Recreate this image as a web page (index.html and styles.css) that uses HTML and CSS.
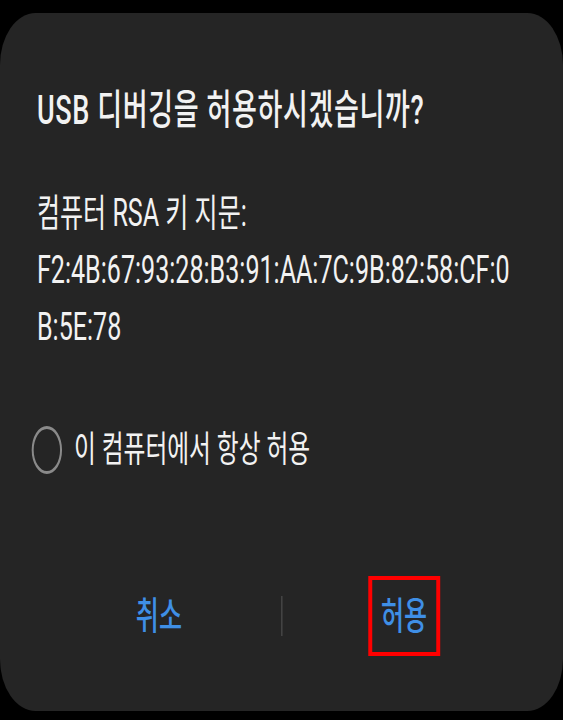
FILE: index.html
```html
<!DOCTYPE html>
<html lang="ko">
<head>
<meta charset="utf-8">
<title>USB 디버깅</title>
<link rel="stylesheet" href="styles.css">
</head>
<body>
<div class="screen">
  <div class="dialog">
    <h1 class="title">USB 디버깅을 허용하시겠습니까?</h1>
    <p class="message">컴퓨터 RSA 키 지문:<br>F2:4B:67:93:28:B3:91:AA:7C:9B:82:58:CF:0<br>B:5E:78</p>
    <div class="check"><span class="radio"></span><span class="check-label">이 컴퓨터에서 항상 허용</span></div>
    <div class="actions">
      <button class="btn">취소</button>
      <span class="divider"></span>
      <button class="btn primary">허용<span class="highlight"></span></button>
    </div>
  </div>
</div>
</body>
</html>
```
FILE: styles.css
```css
html, body {
  margin: 0;
  padding: 0;
  background: #000;
}
body {
  font-family: Roboto, "Noto Sans CJK KR", sans-serif;
  color: #f2f2f2;
}
.screen {
  width: 563px;
  height: 720px;
  overflow: hidden;
  padding-top: 13px;
  box-sizing: border-box;
}
.dialog {
  box-sizing: border-box;
  width: 853px;
  height: 698px;
  background: #252525;
  border-radius: 54px / 52px;
  transform: scaleX(0.66);
  transform-origin: 0 0;
  padding: 69px 56px 0;
  display: flex;
  flex-direction: column;
}
.title {
  margin: 0;
  font-size: 41px;
  line-height: 56px;
  font-weight: 500;
  letter-spacing: 0.9px;
}
.message {
  margin: 47px 0 0;
  font-size: 38px;
  line-height: 57px;
  font-weight: 400;
}
.check {
  margin-top: 70px;
  display: flex;
  align-items: center;
  gap: 18px;
  margin-left: -8px;
}
.radio {
  box-sizing: border-box;
  width: 46px;
  height: 48px;
  border: 3px solid #8a8a8a;
  border-radius: 50%;
  flex: none;
}
.check-label {
  font-size: 36px;
  line-height: 48px;
}
.actions {
  margin-top: 112px;
  display: flex;
  align-items: center;
  height: 60px;
}
.btn {
  flex: 1;
  background: none;
  border: 0;
  padding: 0;
  font-family: Roboto, "Noto Sans CJK KR", sans-serif;
  font-size: 38px;
  font-weight: 500;
  color: #3f8fe6;
  line-height: 50px;
  position: relative;
}
.divider {
  width: 2px;
  height: 40px;
  background: #4a4a4a;
  flex: none;
}
.highlight {
  position: absolute;
  left: 50%;
  top: 50%;
  width: 109px;
  height: 80px;
  margin-left: -54px;
  margin-top: -40px;
  box-sizing: border-box;
  border-style: solid;
  border-color: #ff0000;
  border-width: 4px 6px;
}
```
